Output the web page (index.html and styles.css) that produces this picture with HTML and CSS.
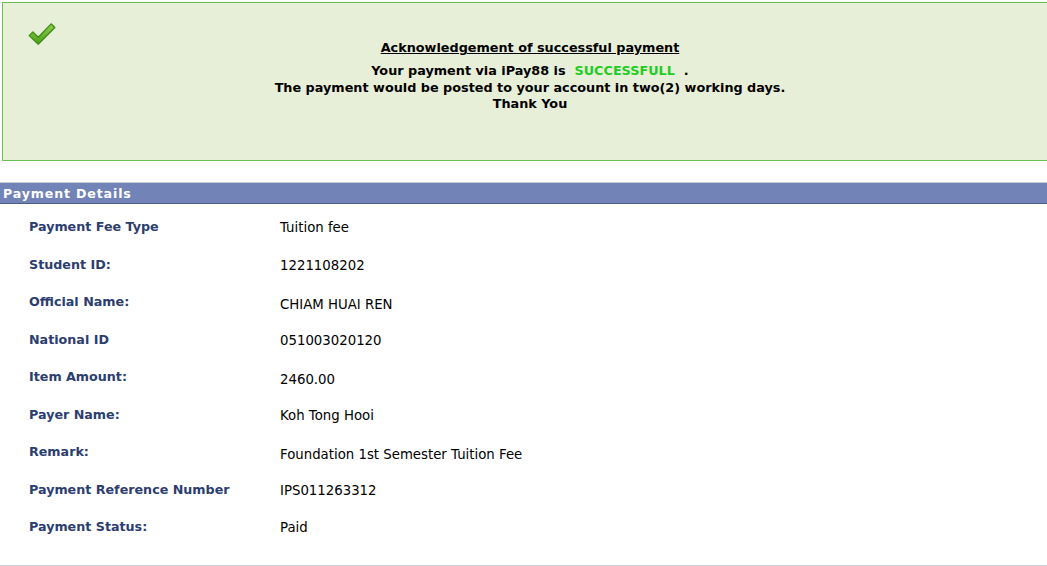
FILE: index.html
```html
<!DOCTYPE html>
<html>
<head>
<meta charset="utf-8">
<link rel="stylesheet" href="styles.css">
</head>
<body>
<div class="page">
  <div class="notice">
    <svg class="check" width="30" height="26" viewBox="0 0 28 24">
      <defs>
        <linearGradient id="g" x1="0" y1="0" x2="0" y2="1">
          <stop offset="0" stop-color="#8fd14a"/>
          <stop offset="1" stop-color="#4a9e1c"/>
        </linearGradient>
      </defs>
      <path d="M2 13.5 L5.5 10 L10.5 15 L22.5 2.5 L26 6 L10.5 21.5 Z" fill="url(#g)" stroke="#3f8a17" stroke-width="1.2" stroke-linejoin="round"/>
    </svg>
    <div class="msg">
      <div class="ack">Acknowledgement of successful payment</div>
      <div class="line">Your payment via iPay88 is &nbsp;<span class="ok">SUCCESSFULL</span>&nbsp; .</div>
      <div class="line">The payment would be posted to your account in two(2) working days.</div>
      <div class="line">Thank You</div>
    </div>
  </div>
  <div class="section-head">Payment Details</div>
  <div class="details">
    <div class="row"><div class="label">Payment Fee Type</div><div class="value">Tuition fee</div></div>
    <div class="row"><div class="label">Student ID:</div><div class="value">1221108202</div></div>
    <div class="row"><div class="label">Official Name:</div><div class="value low">CHIAM HUAI REN</div></div>
    <div class="row"><div class="label">National ID</div><div class="value">051003020120</div></div>
    <div class="row"><div class="label">Item Amount:</div><div class="value low">2460.00</div></div>
    <div class="row"><div class="label">Payer Name:</div><div class="value">Koh Tong Hooi</div></div>
    <div class="row"><div class="label">Remark:</div><div class="value low">Foundation 1st Semester Tuition Fee</div></div>
    <div class="row"><div class="label">Payment Reference Number</div><div class="value">IPS011263312</div></div>
    <div class="row"><div class="label">Payment Status:</div><div class="value">Paid</div></div>
  </div>
</div>
</body>
</html>
```
FILE: styles.css
```css
html, body {
  margin: 0;
  padding: 0;
  background: #ffffff;
  overflow: hidden;
}
body {
  font-family: "DejaVu Sans", Verdana, sans-serif;
  font-size: 12px;
  color: #000;
}
.page {
  padding-top: 2px;
}
.notice {
  position: relative;
  margin-left: 2px;
  width: 1056px;
  height: 159px;
  box-sizing: border-box;
  background: #e8efd9;
  border: 1px solid #66c052;
}
.check {
  position: absolute;
  left: 24px;
  top: 18px;
}
.msg {
  text-align: center;
  font-weight: bold;
  font-size: 12.8px;
  padding-top: 37px;
  line-height: 16.8px;
}
.ack {
  text-decoration: underline;
  margin-bottom: 6px;
}
.ok {
  color: #22cc22;
}
.section-head {
  margin-top: 21px;
  height: 20px;
  background: #7283b8;
  border-top: 1px solid #c6c9d8;
  border-bottom: 1px solid #4c5a88;
  color: #fff;
  font-weight: bold;
  font-size: 12.6px;
  letter-spacing: 0.85px;
  line-height: 21px;
  padding-left: 3px;
}
.details {
  padding-top: 15px;
  padding-bottom: 8px;
  border-bottom: 2px solid #c8ccd8;
}
.row {
  display: grid;
  grid-template-columns: 251px 1fr;
  height: 37.5px;
  padding-left: 29px;
}
.label {
  font-weight: bold;
  font-size: 12.7px;
  color: #2c3d70;
}
.value {
  color: #000;
  font-size: 13.3px;
  padding-top: 1px;
}
.value.low {
  padding-top: 3px;
}
```
